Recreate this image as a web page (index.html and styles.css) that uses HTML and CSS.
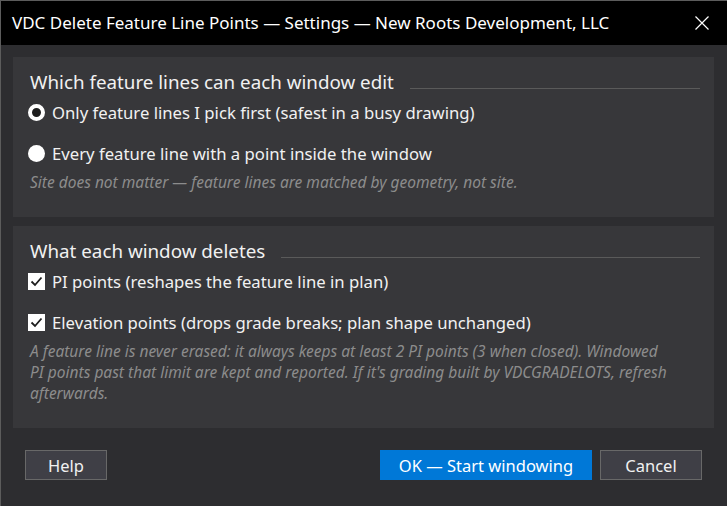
FILE: index.html
```html
<!DOCTYPE html>
<html lang="en">
<head>
<meta charset="utf-8">
<title>VDC Delete Feature Line Points — Settings</title>
<link rel="stylesheet" href="styles.css">
</head>
<body>
<div class="window">
  <div class="titlebar">
    <span class="title">VDC Delete Feature Line Points — Settings — New Roots Development, LLC</span>
    <svg class="close" width="14" height="14" viewBox="0 0 14 14"><path d="M0.5 0.5 L13.5 13.5 M13.5 0.5 L0.5 13.5" stroke="#ffffff" stroke-width="1.2" fill="none"/></svg>
  </div>
  <div class="content">
    <section class="group">
      <div class="heading"><span>Which feature lines can each window edit</span><span class="rule"></span></div>
      <div class="opts">
        <div class="opt"><span class="radio checked"></span><span>Only feature lines I pick first (safest in a busy drawing)</span></div>
        <div class="opt"><span class="radio"></span><span>Every feature line with a point inside the window</span></div>
      </div>
      <p class="note">Site does not matter — feature lines are matched by geometry, not site.</p>
    </section>
    <section class="group">
      <div class="heading"><span>What each window deletes</span><span class="rule"></span></div>
      <div class="opts">
        <div class="opt"><span class="check"><svg width="17" height="17" viewBox="0 0 17 17"><path d="M3.5 8.5 L7 12 L13.5 4.5" stroke="#1e1e1e" stroke-width="1.8" fill="none"/></svg></span><span>PI points (reshapes the feature line in plan)</span></div>
        <div class="opt"><span class="check"><svg width="17" height="17" viewBox="0 0 17 17"><path d="M3.5 8.5 L7 12 L13.5 4.5" stroke="#1e1e1e" stroke-width="1.8" fill="none"/></svg></span><span>Elevation points (drops grade breaks; plan shape unchanged)</span></div>
      </div>
      <p class="note">A feature line is never erased: it always keeps at least 2 PI points (3 when closed). Windowed PI points past that limit are kept and reported. If it's grading built by VDCGRADELOTS, refresh afterwards.</p>
    </section>
    <div class="buttons">
      <button class="btn help">Help</button>
      <span class="spacer"></span>
      <button class="btn primary">OK — Start windowing</button>
      <button class="btn cancel">Cancel</button>
    </div>
  </div>
</div>
</body>
</html>
```

FILE: styles.css
```css
html, body {
  margin: 0;
  padding: 0;
  background: #2d2d30;
}
body {
  font-family: "Noto Sans", "Open Sans", sans-serif;
  color: #f1f1f1;
}
.window {
  width: 727px;
  height: 506px;
  box-sizing: border-box;
  border-left: 1px solid #5c5c5c;
  border-top: 1px solid #5c5c5c;
  background: #2d2d30;
  display: flex;
  flex-direction: column;
}
.titlebar {
  height: 44px;
  background: #000;
  display: flex;
  align-items: center;
  padding: 0 18px 0 11px;
  flex-shrink: 0;
}
.title {
  font-size: 17px;
  color: #fff;
  flex: 1;
  padding-bottom: 2px;
}
.close {
  display: block;
}
.content {
  padding: 12px 13px 0 12px;
  display: flex;
  flex-direction: column;
  gap: 9px;
}
.group {
  background: #37373a;
  padding: 12px 14px 24px 17px;
}
.heading {
  display: flex;
  align-items: center;
  height: 26px;
  font-size: 18.8px;
  line-height: 26px;
}
.rule {
  flex: 1;
  height: 1px;
  background: #5a5a5a;
  margin: 12px 0 0 16px;
}
.opts {
  display: flex;
  flex-direction: column;
  gap: 9px;
  margin-top: 1px;
  margin-left: -2px;
}
.opt {
  height: 32px;
  display: flex;
  align-items: center;
  gap: 7px;
  font-size: 16.7px;
}
.radio {
  width: 17px;
  height: 17px;
  border-radius: 50%;
  background: #fff;
  box-sizing: border-box;
  flex-shrink: 0;
}
.radio.checked {
  background: #1e1e1e;
  border: 4px solid #fff;
}
.check {
  width: 17px;
  height: 17px;
  background: #fff;
  flex-shrink: 0;
}
.check svg { display: block; }
.note {
  margin: 3px 0 0 0;
  max-width: 640px;
  font-size: 15.5px;
  font-style: italic;
  line-height: 21px;
  color: #8c8c8c;
}
.buttons {
  display: flex;
  margin-top: 13px;
  padding: 0 12px;
  gap: 8px;
}
.spacer { flex: 1; }
.btn {
  height: 30px;
  box-sizing: border-box;
  background: #3f3f46;
  border: 1px solid #686868;
  color: #f1f1f1;
  font-family: "Noto Sans", "Open Sans", sans-serif;
  font-size: 16.5px;
  padding: 0;
}
.help { width: 82px; }
.primary {
  width: 212px;
  background: #0078d7;
  border-color: #0078d7;
  color: #fff;
}
.cancel { width: 102px; }
```
